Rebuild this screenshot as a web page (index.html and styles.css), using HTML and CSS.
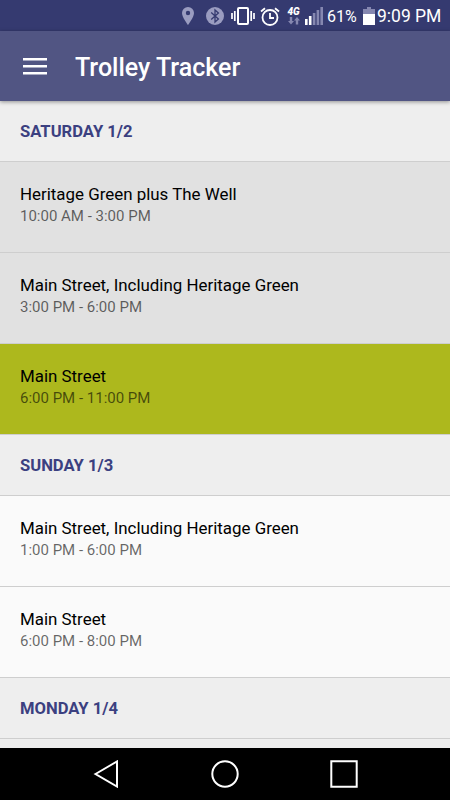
FILE: index.html
```
<!DOCTYPE html>
<html lang="en">
<head>
    <meta charset="UTF-8">
    <meta name="viewport" content="width=device-width, initial-scale=1.0">
    <title>Trolley Tracker</title>
    <link rel="stylesheet" href="styles.css">
</head>
<body>
    <div class="screen">
        <!-- Status bar -->
        <div class="status-bar">
            <svg class="icon-pin" width="12" height="18" viewBox="0 0 12 18">
                <path fill="#9a9cc0" fill-rule="evenodd" d="M6 0a6 6 0 0 0-6 6c0 4.300 6 12 6 12s6-7.700 6-12a6 6 0 0 0-6-6zm0 3.800a2.200 2.200 0 1 1 0 4.400 2.200 2.200 0 0 1 0-4.400z"/>
            </svg>
            <svg class="icon-bluetooth" width="18" height="18" viewBox="0 0 18 18">
                <circle cx="9" cy="9" r="9" fill="#9a9cc0"/>
                <path fill="none" stroke="#353a70" stroke-width="1.300" d="M5.200 5.600l7.200 6.400L9 15V3l3.400 3-7.200 6.400"/>
            </svg>
            <svg class="icon-vibrate" width="24" height="18" viewBox="0 0 24 18">
                <rect x="7" y="1" width="10" height="16" rx="1" fill="none" stroke="#fff" stroke-width="2"/>
                <path fill="none" stroke="#fff" stroke-width="1.700" d="M3.800 4v10M1 6v6M20.200 4v10M23 6v6"/>
            </svg>
            <svg class="icon-alarm" width="20" height="19" viewBox="0 0 20 19">
                <g fill="none" stroke="#fff" stroke-width="1.800">
                    <circle cx="10" cy="10.500" r="7.500"/>
                    <path d="M10 6v5h4M1 4.500l4-3.300M19 4.500l-4-3.300"/>
                </g>
            </svg>
            <div class="network">
                <span class="network-type">4G</span>
                <svg width="12" height="8" viewBox="0 0 12 8">
                    <path fill="#8587b0" d="M1.800 0h2.400v4H6L3 7.500 0 4h1.800zM7.800 7.500h2.400v-4H12L9 0 6 3.500h1.800z"/>
                </svg>
            </div>
            <svg class="icon-signal" width="18" height="18" viewBox="0 0 18 18">
                <path fill="#fff" d="M0 12h2.600v6H0zM3.900 9h2.600v9H3.900z"/>
                <path fill="#8587b0" d="M7.800 6h2.600v12H7.800zM11.600 3h2.600v15h-2.600zM15.400 0H18v18h-2.600z"/>
            </svg>
            <span class="battery-level">61%</span>
            <svg class="icon-battery" width="12" height="18" viewBox="0 0 12 18">
                <path fill="#8587b0" d="M4 0h4v2h4v5H0V2h4z"/>
                <path fill="#fff" d="M0 7h12v11H0z"/>
            </svg>
            <span class="clock">9:09 PM</span>
        </div>

        <!-- Toolbar -->
        <div class="toolbar">
            <svg class="menu-icon" width="24" height="17" viewBox="0 0 24 17">
                <path fill="#fff" d="M0 0h24v2.400H0zM0 7h24v2.400H0zM0 14h24v2.400H0z"/>
            </svg>
            <h1>Trolley Tracker</h1>
        </div>

        <!-- Schedule -->
        <div class="schedule">
            <h2 class="day">SATURDAY 1/2</h2>
            <div class="run past">
                <div class="route">Heritage Green plus The Well</div>
                <div class="time">10:00 AM - 3:00 PM</div>
            </div>
            <div class="run past">
                <div class="route">Main Street, Including Heritage Green</div>
                <div class="time">3:00 PM - 6:00 PM</div>
            </div>
            <div class="run active">
                <div class="route">Main Street</div>
                <div class="time">6:00 PM - 11:00 PM</div>
            </div>
            <h2 class="day">SUNDAY 1/3</h2>
            <div class="run">
                <div class="route">Main Street, Including Heritage Green</div>
                <div class="time">1:00 PM - 6:00 PM</div>
            </div>
            <div class="run">
                <div class="route">Main Street</div>
                <div class="time">6:00 PM - 8:00 PM</div>
            </div>
            <h2 class="day">MONDAY 1/4</h2>
            <div class="run upcoming"></div>
        </div>

        <!-- Navigation bar -->
        <div class="nav-bar">
            <svg width="28" height="28" viewBox="0 0 28 28">
                <path d="M3.500 14L25 1.500v25z"/>
            </svg>
            <svg width="28" height="28" viewBox="0 0 28 28">
                <circle cx="14" cy="14" r="12.700"/>
            </svg>
            <svg width="28" height="28" viewBox="0 0 28 28">
                <path d="M1.300 1.300h25.400v25.400H1.300z"/>
            </svg>
        </div>
    </div>
</body>
</html>
```
FILE: styles.css
```
/* Base styles */
body {
    margin: 0;
    font-family: Roboto, sans-serif;
}

.screen {
    display: flex;
    flex-direction: column;
    width: 450px;
    height: 800px;
    overflow: hidden;
}

/* Status bar */
.status-bar {
    display: flex;
    align-items: center;
    box-sizing: border-box;
    height: 31px;
    padding: 1px 0 0 182px;
    background: #353a70;
    color: #fff;
    flex-shrink: 0;
}

.status-bar svg {
    flex-shrink: 0;
}

.icon-bluetooth {
    margin-left: 12px;
}

.icon-vibrate {
    margin-left: 7px;
}

.icon-alarm {
    margin-left: 5px;
}

.network {
    display: flex;
    flex-direction: column;
    align-items: center;
    width: 15px;
    margin-left: 6px;
}

.network-type {
    font-size: 10px;
    line-height: 10px;
    font-weight: 900;
    font-style: italic;
}

.icon-signal {
    margin-left: 4px;
}

.battery-level {
    width: 30px;
    margin-left: 4px;
    font-size: 16px;
    white-space: nowrap;
}

.icon-battery {
    margin-left: 6px;
}

.clock {
    margin-left: 2px;
    font-size: 17.5px;
    white-space: nowrap;
}

/* Toolbar */
.toolbar {
    display: flex;
    align-items: center;
    height: 70px;
    padding-left: 23px;
    background: #515583;
    box-shadow: 0 1px 4px rgba(0, 0, 0, 0.4);
    flex-shrink: 0;
    z-index: 1;
}

.toolbar h1 {
    margin: 2px 0 0 28px;
    color: #fff;
    font-size: 25px;
    font-weight: 500;
}

/* Schedule */
.schedule {
    flex: 1;
    overflow: hidden;
}

.day {
    box-sizing: border-box;
    height: 61px;
    margin: 0;
    padding-left: 20px;
    border-bottom: 1px solid #cecece;
    background: #eee;
    color: #3b4080;
    font-size: 16.6px;
    font-weight: 700;
    line-height: 61px;
}

.run {
    box-sizing: border-box;
    height: 91px;
    padding: 21px 20px 0;
    border-bottom: 1px solid #cecece;
    background: #fafafa;
}

.run.past {
    background: #e1e1e1;
}

.run.active {
    background: #adb81d;
}

.run.upcoming {
    background: #eee;
}

.route {
    color: #000;
    font-size: 16.9px;
    line-height: 22px;
}

.time {
    color: rgba(0, 0, 0, 0.6);
    font-size: 15px;
    line-height: 22px;
}

/* Navigation bar */
.nav-bar {
    display: flex;
    justify-content: center;
    align-items: center;
    gap: 91px;
    height: 52px;
    background: #000;
    flex-shrink: 0;
}

.nav-bar svg {
    fill: none;
    stroke: #fff;
    stroke-width: 2;
}
```
